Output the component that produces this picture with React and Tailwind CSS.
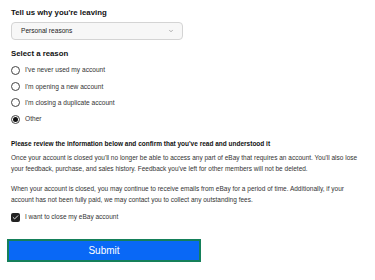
import { ChevronDown, Check } from 'lucide-react';

const reasons = [
  "I've never used my account",
  "I'm opening a new account",
  "I'm closing a duplicate account",
  'Other',
];

export default function App() {
  return (
    <div className="w-[375px] h-[280px] bg-white overflow-hidden px-[11px] pt-[8px] text-[#333]" style={{ fontFamily: '"Liberation Sans", Arial, sans-serif' }}>
      <h2 className="text-[7.8px] leading-[10px] font-bold text-[#111]">Tell us why you're leaving</h2>
      <div className="mt-[4px] w-[172px] h-[18px] rounded-[4px] border border-[#d4d4d4] bg-[#f7f7f7] flex items-center justify-between pl-[9px] pr-[8px]">
        <span className="text-[6.6px] text-[#222]">Personal reasons</span>
        <ChevronDown size={6} strokeWidth={2} className="text-[#666]" />
      </div>

      <h2 className="mt-[9px] text-[7.8px] leading-[10px] font-bold text-[#111]">Select a reason</h2>
      <div className="mt-[3px] flex flex-col">
        {reasons.map((r, i) => (
          <label key={r} className="h-[16.3px] flex items-center gap-[5px]">
            <span className="w-[9px] h-[9px] rounded-full border border-[#444] flex items-center justify-center shrink-0">
              {i === 3 && <span className="w-[5px] h-[5px] rounded-full bg-[#111]" />}
            </span>
            <span className="text-[6.6px] text-[#333]">{r}</span>
          </label>
        ))}
      </div>

      <p className="mt-[12px] text-[6.5px] leading-[10px] font-bold text-[#111]">
        Please review the information below and confirm that you've read and understood it
      </p>
      <p className="mt-[3px] text-[6.5px] leading-[11px] text-[#333] w-[360px]">
        Once your account is closed you'll no longer be able to access any part of eBay that requires an account. You'll also lose your feedback, purchase, and sales history. Feedback you've left for other members will not be deleted.
      </p>
      <p className="mt-[9px] text-[6.5px] leading-[11px] text-[#333] w-[352px]">
        When your account is closed, you may continue to receive emails from eBay for a period of time. Additionally, if your account has not been fully paid, we may contact you to collect any outstanding fees.
      </p>
      <label className="mt-[7px] flex items-center gap-[5px]">
        <span className="w-[9px] h-[9px] rounded-[2px] bg-[#222] flex items-center justify-center">
          <Check size={7} strokeWidth={3} className="text-white" />
        </span>
        <span className="text-[6.5px] text-[#333]">I want to close my eBay account</span>
      </label>

      <button className="mt-[17px] -ml-[4px] w-[194px] h-[23px] bg-[#0968f6] border-2 border-[#15805a] text-white text-[10px] flex items-center justify-center">
        Submit
      </button>
    </div>
  );
}
